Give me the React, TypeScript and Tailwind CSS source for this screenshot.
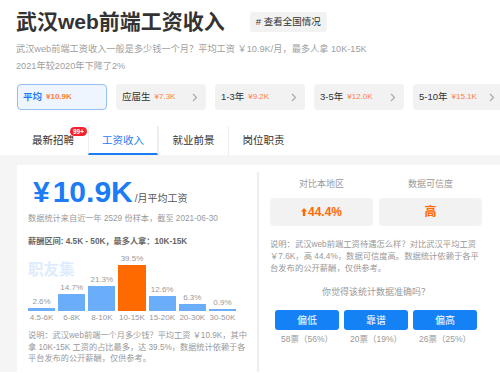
import React from "react";

const font = { fontFamily: '"Liberation Sans", "Noto Sans CJK SC", sans-serif' };

const cards = [
  { label: "平均", value: "¥10.9K", active: true },
  { label: "应届生", value: "¥7.3K" },
  { label: "1-3年", value: "¥9.2K" },
  { label: "3-5年", value: "¥12.0K" },
  { label: "5-10年", value: "¥15.1K" },
];

const bars = [
  { k: "4.5-6K", p: 2.6 },
  { k: "6-8K", p: 14.7 },
  { k: "8-10K", p: 21.3 },
  { k: "10-15K", p: 39.5, hi: true },
  { k: "15-20K", p: 12.6 },
  { k: "20-30K", p: 6.3 },
  { k: "30-50K", p: 0.9 },
];

function Chevron() {
  return (
    <svg width="6" height="9" viewBox="0 0 6 9" className="ml-auto">
      <path d="M1 1 L4.5 4.5 L1 8" fill="none" stroke="#aaa" strokeWidth="1.2" />
    </svg>
  );
}

export default function App() {
  return (
    <div className="w-[500px] h-[373px] overflow-hidden bg-white text-[#333]" style={font}>
      <div className="pl-4 pt-[8px]">
        <div className="flex items-center">
          <h1 className="text-[21px] font-bold leading-[28px] text-[#333] whitespace-nowrap">武汉web前端工资收入</h1>
          <span className="ml-[25px] h-[20px] leading-[20px] px-[6px] rounded-[3px] bg-[#f2f2f2] text-[9.5px] text-[#333] whitespace-nowrap">
            # 查看全国情况
          </span>
        </div>
        <p className="mt-[5px] text-[9.2px] leading-[17px] text-[#a0a0a0] whitespace-nowrap">
          武汉web前端工资收入一般是多少钱一个月？平均工资 ￥10.9K/月，最多人拿 10K-15K
          <br />
          2021年较2020年下降了2%
        </p>
      </div>

      <div className="flex gap-[9px] pl-[17px] mt-[9px] w-[600px]">
        {cards.map((c) => (
          <div
            key={c.label}
            className={
              c.active
                ? "w-[90px] h-[26px] shrink-0 rounded-[4px] border border-[#94c0f7] bg-[#eef5ff] flex items-center px-[5px]"
                : "w-[90px] h-[26px] shrink-0 rounded-[4px] bg-[#f2f2f2] flex items-center px-[6px] pr-[8px]"
            }
          >
            <span className={c.active ? "text-[9.5px] text-[#1b7cf5] font-bold" : "text-[9.5px] text-[#333]"}>{c.label}</span>
            <span className={c.active ? "ml-[4px] text-[8px] font-bold text-[#ff7a35]" : "ml-[4px] text-[8px] text-[#ff7f3f]"}>{c.value}</span>
            {!c.active && <Chevron />}
          </div>
        ))}
      </div>

      <div className="flex pl-[18px] mt-[16px] h-[29px]">
        {["最新招聘", "工资收入", "就业前景", "岗位职责"].map((t, i) => (
          <div
            key={t}
            className={
              "relative w-[70px] h-[29px] flex items-center justify-center text-[10.5px] " +
              (i > 0 ? "border-l border-[#eee] " : "") +
              (i === 1 ? "text-[#1b7cf5] border-b-2 border-b-[#1b7cf5] border-r border-r-[#eee]" : "text-[#333]")
            }
          >
            <span className={i === 1 ? "mt-[2px]" : ""}>{t}</span>
            {i === 0 && (
              <span className="absolute left-[52px] top-[1px] w-[17px] h-[9px] rounded-full bg-[#f5222d] text-white text-[6.5px] font-bold leading-[9px] text-center">
                99+
              </span>
            )}
          </div>
        ))}
      </div>

      <div className="bg-[#f5f5f6] pl-[17px] pt-[10px] h-[217px]">
        <div className="bg-white flex h-full">
          <div className="relative w-[240px] pl-[11px] pt-[12px]">
            <div className="flex items-baseline">
              <span className="text-[30px] leading-[30px] font-bold text-[#1b7cf5] ml-[5px]">¥</span>
              <span className="text-[30px] leading-[30px] font-bold text-[#1b7cf5] ml-[3px]">10.9K</span>
              <span className="text-[10px] text-[#555] ml-[2px]">/月平均工资</span>
            </div>
            <div className="mt-[6px] text-[8.2px] leading-[12px] text-[#999] whitespace-nowrap">
              数据统计来自近一年 2529 份样本，截至 2021-06-30
            </div>
            <div className="mt-[11px] text-[8.2px] leading-[12px] text-[#666] font-bold whitespace-nowrap">
              薪酬区间: 4.5K - 50K，最多人拿：10K-15K
            </div>
            <div className="absolute left-[11px] top-[95px] text-[15.5px] font-bold text-[#deecfd] leading-[20px]">职友集</div>
            <div className="relative mt-[6px] grid grid-cols-7 gap-[3px] w-[208px] h-[57px] items-end">
              {bars.map((b) => (
                <div key={b.k} className="flex flex-col items-center justify-end">
                  <span className="text-[8px] leading-[10px] text-[#999] mb-[1px]">{b.p}%</span>
                  <div
                    className={b.hi ? "w-full bg-[#ff6a00]" : "w-full bg-[#6aaefa]"}
                    style={{ height: Math.max(2, Math.round(b.p * 1.165)) }}
                  />
                </div>
              ))}
            </div>
            <div className="mt-[2px] grid grid-cols-7 gap-[3px] w-[208px]">
              {bars.map((b) => (
                <span key={b.k} className="text-center text-[8px] leading-[10px] text-[#999] whitespace-nowrap">
                  {b.k}
                </span>
              ))}
            </div>
            <p className="mt-[7px] text-[8.2px] leading-[11.5px] text-[#999] whitespace-nowrap">
              说明：武汉web前端一个月多少钱？平均工资 ￥10.9K，其中
              <br />
              拿 10K-15K 工资的占比最多，达 39.5%，数据统计依赖于各
              <br />
              平台发布的公开薪酬，仅供参考。
            </p>
          </div>

          <div className="w-[2px] bg-[#eeeeee] mt-[7px]" />

          <div className="flex-1 pl-[11px] pt-[13px]">
            <div className="flex gap-[6px]">
              <div className="w-[103px] flex flex-col items-center">
                <span className="text-[9px] leading-[12px] text-[#999]">对比本地区</span>
                <div className="mt-[8px] w-full h-[28px] rounded-[4px] bg-[#f2f2f2] flex items-center justify-center">
                  <svg width="6" height="8" viewBox="0 0 6 8" className="mr-[1px]">
                    <path d="M3 0 L6 3.5 L4.2 3.5 L4.2 8 L1.8 8 L1.8 3.5 L0 3.5 Z" fill="#ff6a00" />
                  </svg>
                  <span className="text-[12px] font-bold text-[#ff6a00]">44.4%</span>
                </div>
              </div>
              <div className="w-[103px] flex flex-col items-center">
                <span className="text-[9px] leading-[12px] text-[#999]">数据可信度</span>
                <div className="mt-[8px] w-full h-[28px] rounded-[4px] bg-[#f2f2f2] flex items-center justify-center">
                  <span className="text-[12px] font-bold text-[#ff6a00]">高</span>
                </div>
              </div>
            </div>
            <p className="mt-[12px] text-[8.3px] leading-[12px] text-[#999] whitespace-nowrap">
              说明：武汉web前端工资待遇怎么样？对比武汉平均工资
              <br />
              ￥7.6K，高 44.4%，数据可信度高。数据统计依赖于各平
              <br />
              台发布的公开薪酬，仅供参考。
            </p>
            <div className="w-[212px] mt-[12px] text-center text-[9px] leading-[12px] text-[#999]">你觉得该统计数据准确吗？</div>
            <div className="w-[212px] mt-[12px] flex justify-center gap-[5px]">
              {[
                ["偏低", "58票（56%）"],
                ["靠谱", "20票（19%）"],
                ["偏高", "26票（25%）"],
              ].map(([a, v]) => (
                <div key={a} className="w-[64px] flex flex-col items-center">
                  <div className="w-full h-[20px] rounded-[3px] bg-[#1482f5] text-white text-[10px] flex items-center justify-center">
                    {a}
                  </div>
                  <span className="mt-[4px] text-[8.5px] leading-[10px] text-[#999] whitespace-nowrap">{v}</span>
                </div>
              ))}
            </div>
          </div>
        </div>
      </div>
    </div>
  );
}
